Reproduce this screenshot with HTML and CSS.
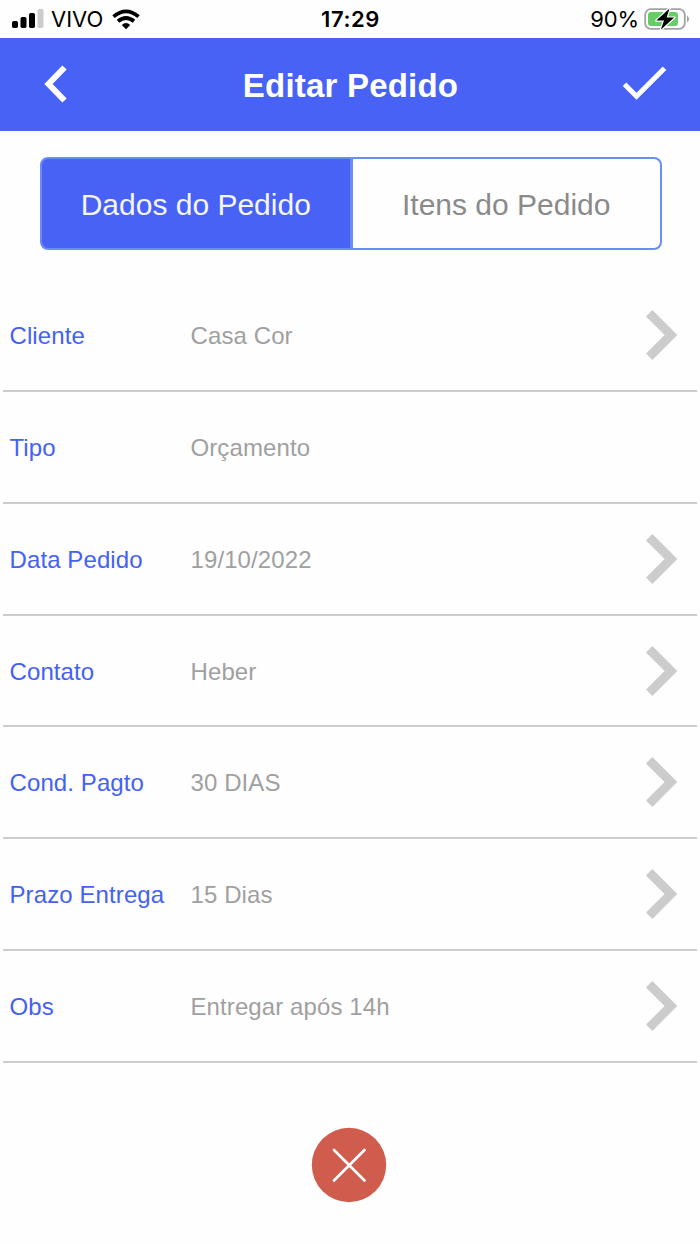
FILE: index.html
```html
<!DOCTYPE html>
<html lang="pt-BR">
<head>
<meta charset="utf-8">
<title>Editar Pedido</title>
<link rel="stylesheet" href="styles.css">
</head>
<body>
<div class="status">
  <div class="status-left">
    <svg class="signal" width="32" height="20" viewBox="0 0 32 20"><rect x="0" y="12" width="6" height="7" rx="1.7"/><rect x="8.5" y="8" width="6" height="11" rx="1.7"/><rect x="17" y="4" width="6" height="15" rx="1.7"/><rect x="25.5" y="0" width="6" height="19" rx="1.7" fill="#ccc"/></svg>
    <span class="carrier">VIVO</span>
    <svg class="wifi" width="28" height="21" viewBox="0 0 28 21" fill="none" stroke="#000" stroke-width="3.8"><path d="M1.5 7.6Q14-2.8 26.5 7.6"/><path d="M6 12.3Q14 5.8 22 12.3"/><path d="M9.8 16Q14 12.2 18.2 16L14 20.3Z" fill="#000" stroke="none"/></svg>
  </div>
  <span class="time">17:29</span>
  <div class="status-right">
    <span class="percent">90%</span>
    <svg width="46" height="24" viewBox="0 0 46 24"><rect x="1.2" y="2.2" width="39.6" height="19.6" rx="5.5" fill="#fff" stroke="#a2a2a2" stroke-width="1.8"/><path d="M43 8.5Q45 9.5 45 12T43 15.5Z" fill="#a2a2a2"/><rect x="4" y="5" width="30" height="14" rx="3" fill="#67ce67"/><path d="M25.5 1.5 12.3 13.6H20L16.8 22.8 30.2 10.6H22.6Z" fill="#000" stroke="#fff" stroke-width="2.4" paint-order="stroke" stroke-linejoin="round"/></svg>
  </div>
</div>
<header class="navbar">
  <svg width="26" height="40" viewBox="0 0 26 40"><path d="M22.5 3.5 6.5 20 22.5 36.5" fill="none" stroke="#fff" stroke-width="6"/></svg>
  <h1 class="title">Editar Pedido</h1>
  <svg width="46" height="36" viewBox="0 0 46 36"><path d="M2.5 18.3 14.5 30.3 42.5 2.3" fill="none" stroke="#fff" stroke-width="5"/></svg>
</header>
<main>
  <div class="tabs">
    <div class="tab tab-active">Dados do Pedido</div>
    <div class="tab">Itens do Pedido</div>
  </div>
  <div class="rows">
    <div class="row"><span class="label">Cliente</span><span class="value">Casa Cor</span><svg class="chev" viewBox="0 0 32 50"><path d="M3.2 3.2 25 25 3.2 46.8"/></svg></div>
    <div class="row"><span class="label">Tipo</span><span class="value">Orçamento</span></div>
    <div class="row"><span class="label">Data Pedido</span><span class="value">19/10/2022</span><svg class="chev" viewBox="0 0 32 50"><path d="M3.2 3.2 25 25 3.2 46.8"/></svg></div>
    <div class="row"><span class="label">Contato</span><span class="value">Heber</span><svg class="chev" viewBox="0 0 32 50"><path d="M3.2 3.2 25 25 3.2 46.8"/></svg></div>
    <div class="row"><span class="label">Cond. Pagto</span><span class="value">30 DIAS</span><svg class="chev" viewBox="0 0 32 50"><path d="M3.2 3.2 25 25 3.2 46.8"/></svg></div>
    <div class="row"><span class="label">Prazo Entrega</span><span class="value">15 Dias</span><svg class="chev" viewBox="0 0 32 50"><path d="M3.2 3.2 25 25 3.2 46.8"/></svg></div>
    <div class="row"><span class="label">Obs</span><span class="value">Entregar após 14h</span><svg class="chev" viewBox="0 0 32 50"><path d="M3.2 3.2 25 25 3.2 46.8"/></svg></div>
  </div>
  <div class="actions">
    <svg width="76" height="76" viewBox="0 0 76 76"><circle cx="38" cy="38" r="37.2" fill="#cf5c4c"/><path d="M23 23 53.5 53.5M53.5 23 23 53.5" stroke="#fff" stroke-width="2.7" stroke-linecap="round"/></svg>
  </div>
</main>
</body>
</html>
```
FILE: styles.css
```css
* { box-sizing: border-box; }
body {
  margin: 0;
  background: #fefefe;
  font-family: "Liberation Sans", Arial, sans-serif;
}
svg { display: block; flex: none; }
.status {
  display: grid;
  grid-template-columns: 1fr auto 1fr;
  align-items: center;
  height: 38px;
  padding: 0 10px 0 12px;
  font: 400 22px/38px Inter, sans-serif;
  color: #000;
}
.status-left, .status-right { display: flex; align-items: center; }
.status-right { justify-content: flex-end; gap: 5px; }
.carrier { margin-left: 7px; }
.wifi { margin-left: 9px; }
.time { font-weight: 600; letter-spacing: .6px; margin-right: 1px; }
.percent { letter-spacing: -.1px; }
.navbar {
  display: flex;
  align-items: center;
  justify-content: space-between;
  height: 93px;
  padding: 0 32px 2px 42px;
  background: #4762f5;
}
.title {
  margin: 5px 0 0 11px;
  font-size: 33px;
  line-height: 40px;
  letter-spacing: .2px;
  color: #fff;
}
.tabs {
  display: flex;
  height: 93px;
  margin: 26px 38px 0 40px;
}
.tab {
  flex: 1;
  border: 2px solid #6a8df5;
  border-left-width: 1px;
  border-radius: 0 8px 8px 0;
  text-align: center;
  font-size: 30px;
  line-height: 92px;
  letter-spacing: 0;
  color: #8a8a8a;
}
.tab-active {
  border-left-width: 2px;
  border-radius: 8px 0 0 8px;
  background: #4762f5;
  color: #f4f5ff;
}
.rows { margin: 30px 3px 0; }
.row {
  display: flex;
  align-items: center;
  height: 111.87px;
  padding: 0 19px 0 6.5px;
  border-bottom: 2px solid #ccc;
  font-size: 24px;
  line-height: 30px;
  letter-spacing: .1px;
}
.label { width: 181px; padding-top: 2px; color: #4461f4; }
.value { flex: 1; padding-top: 2px; color: #a0a0a0; }
.chev { width: 32px; height: 50px; }
.chev path { fill: none; stroke: #ccc; stroke-width: 9; }
.actions { display: flex; justify-content: center; padding: 64px 2px 0 0; }
```
